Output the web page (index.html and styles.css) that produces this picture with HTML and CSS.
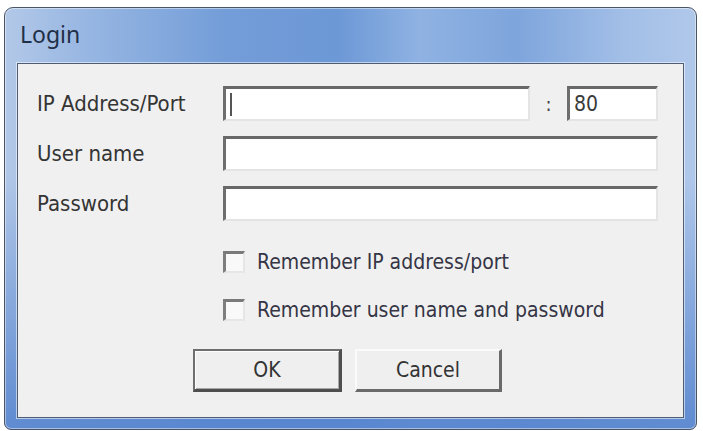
FILE: index.html
```html
<!DOCTYPE html>
<html>
<head>
<meta charset="utf-8">
<title>Login</title>
<link rel="stylesheet" href="styles.css">
</head>
<body>
<div class="window">
  <div class="titlebar"><span class="title">Login</span></div>
  <div class="client">
    <div class="form">
      <label class="label">IP Address/Port</label>
      <div class="ip-row">
        <div class="field field-ip"><span class="caret"></span></div>
        <span class="colon">:</span>
        <div class="field field-port">80</div>
      </div>
      <label class="label">User name</label>
      <div class="field field-wide"></div>
      <label class="label">Password</label>
      <div class="field field-wide"></div>
    </div>
    <div class="checks">
      <div class="check-row"><span class="checkbox"></span><span class="check-label">Remember IP address/port</span></div>
      <div class="check-row"><span class="checkbox"></span><span class="check-label">Remember user name and password</span></div>
    </div>
    <div class="buttons">
      <div class="btn btn-default">OK</div>
      <div class="btn">Cancel</div>
    </div>
  </div>
</div>
</body>
</html>
```
FILE: styles.css
```css
html, body {
  margin: 0;
  padding: 0;
  background: #ffffff;
}
body {
  width: 703px;
  height: 431px;
  overflow: hidden;
  font-family: "DejaVu Sans Condensed", "DejaVu Sans", "Liberation Sans", sans-serif;
  color: #343434;
}
.window {
  box-sizing: border-box;
  margin: 7px 6px 0 4px;
  width: 693px;
  height: 423px;
  border: 1px solid #4a5466;
  border-radius: 9px 9px 7px 7px;
  background:
    linear-gradient(to bottom, rgba(86, 132, 206, 0) 0%, rgba(86, 132, 206, 0) 40%, rgba(86, 132, 206, 0.9) 100%),
    linear-gradient(90deg, #b2c8e8 0%, #97b6e2 12%, #739dd8 32%, #6c98d6 48%, #8fb2e2 60%, #7ea5dc 74%, #a3bfe7 90%, #b0c8ea 100%);
  display: flex;
  flex-direction: column;
  box-shadow: inset 0 0 0 1px rgba(255, 255, 255, 0.45);
}
.titlebar {
  height: 55px;
  flex: none;
  display: flex;
  align-items: center;
  padding-left: 15px;
}
.title {
  font-family: "Noto Sans", "Open Sans", sans-serif;
  font-size: 23px;
  color: #1f2f48;
  margin-top: -3px;
}
.client {
  flex: 1;
  margin: 0 12px 11px 12px;
  background: #f0f0f0;
  border: 1px solid #4e5c74;
  box-shadow: 0 0 0 1px rgba(255, 255, 255, 0.55);
  padding: 22px 0 0 19px;
}
.form {
  display: grid;
  grid-template-columns: 186px 1fr;
  row-gap: 15px;
  align-items: center;
}
.label {
  font-size: 22px;
  line-height: 35px;
}
.ip-row {
  display: flex;
  align-items: center;
}
.field {
  box-sizing: border-box;
  height: 35px;
  background: #ffffff;
  border-top: 3px solid #686868;
  border-left: 3px solid #6e6e6e;
  border-right: 2px solid #e4e4e4;
  border-bottom: 2px solid #e4e4e4;
  font-size: 21px;
  line-height: 30px;
  padding-left: 4px;
  display: flex;
  align-items: center;
}
.field-ip {
  width: 307px;
}
.colon {
  width: 37px;
  text-align: center;
  font-size: 20px;
  color: #444;
}
.field-port {
  width: 91px;
  color: #3a3a3a;
}
.field-wide {
  width: 435px;
}
.caret {
  display: block;
  width: 2px;
  height: 23px;
  background: #555;
}
.checks {
  padding: 30px 0 0 186px;
  display: flex;
  flex-direction: column;
  gap: 26px;
}
.check-row {
  display: flex;
  align-items: center;
  height: 22px;
}
.checkbox {
  box-sizing: border-box;
  width: 22px;
  height: 22px;
  background: #f9f9f9;
  border-top: 3px solid #7a7a7a;
  border-left: 3px solid #7e7e7e;
  border-right: 2px solid #e6e6e6;
  border-bottom: 2px solid #e6e6e6;
  margin-right: 12px;
}
.check-label {
  font-size: 21px;
  color: #353545;
}
.buttons {
  display: flex;
  gap: 13px;
  padding: 28px 0 0 156px;
}
.btn {
  box-sizing: border-box;
  width: 147px;
  height: 43px;
  background: #efefef;
  border-top: 2px solid #fbfbfb;
  border-left: 2px solid #fbfbfb;
  border-right: 3px solid #6a6a6a;
  border-bottom: 3px solid #6a6a6a;
  display: flex;
  align-items: center;
  justify-content: center;
  font-size: 21px;
  color: #333;
}
.btn-default {
  width: 149px;
  border-top: 2px solid #6e6e6e;
  border-left: 2px solid #6e6e6e;
  border-right: 3px solid #4e4e4e;
  border-bottom: 3px solid #4e4e4e;
  box-shadow: inset 1px 1px 0 #fdfdfd, inset -1px -1px 0 #a8a8a8;
}
```
